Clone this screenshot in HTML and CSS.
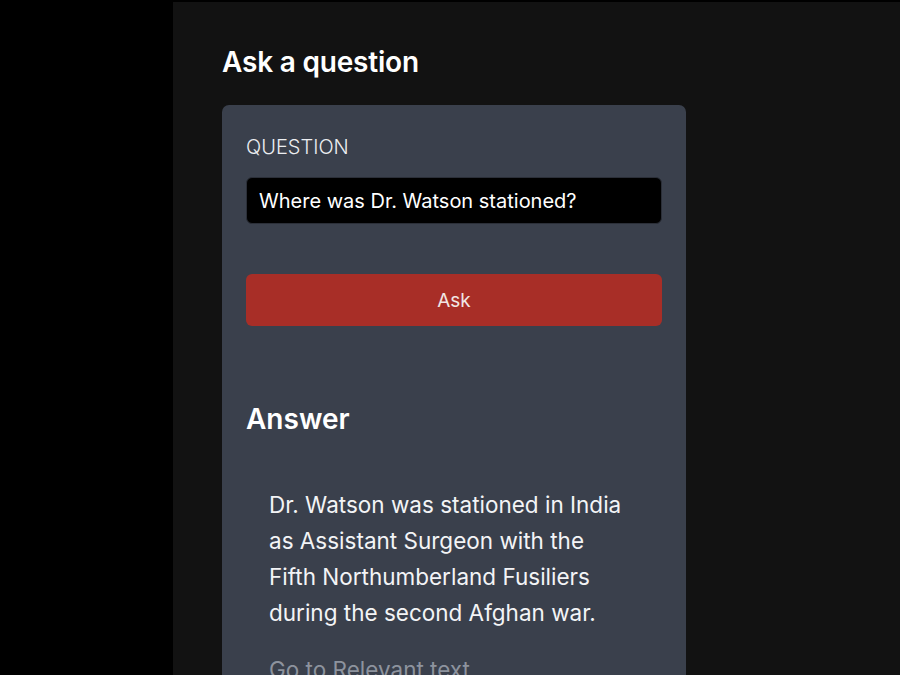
FILE: index.html
```html
<!DOCTYPE html>
<html lang="en">
<head>
<meta charset="utf-8">
<title>Ask a question</title>
<link rel="stylesheet" href="styles.css">
</head>
<body>
<div class="shell">
  <aside class="rail"></aside>
  <main class="panel">
    <h1 class="title">Ask a question</h1>
    <section class="card">
      <label class="label" for="q">QUESTION</label>
      <div class="input" id="q">Where was Dr. Watson stationed?</div>
      <button class="ask">Ask</button>
      <h2 class="answer-title">Answer</h2>
      <div class="answer">
        <p class="answer-text">Dr. Watson was stationed in India as Assistant Surgeon with the Fifth Northumberland Fusiliers during the second Afghan war.</p>
        <a class="link">Go to Relevant text</a>
      </div>
    </section>
  </main>
</div>
</body>
</html>
```
FILE: styles.css
```css
* { box-sizing: border-box; }
html, body {
  margin: 0;
  height: 100%;
  background: #000;
  overflow: hidden;
}
body {
  font-family: Inter, "Noto Sans", sans-serif;
  color: #fff;
}
.shell {
  display: flex;
  height: 100%;
  padding-top: 2px;
}
.rail {
  width: 173px;
  flex: none;
  background: #000;
}
.panel {
  flex: 1;
  background: #121212;
  padding: 42px 0 0 49px;
}
.title {
  margin: 0 0 25px;
  font-size: 28px;
  font-weight: 600;
  line-height: 36px;
  letter-spacing: -0.2px;
}
.card {
  width: 464px;
  background: #3a404c;
  border-radius: 7px;
  padding: 30px 24px 40px;
  display: flex;
  flex-direction: column;
}
.label {
  font-size: 20px;
  font-weight: 300;
  line-height: 24px;
  color: #eceef1;
}
.input {
  margin-top: 18px;
  height: 47px;
  background: #000;
  border: 1px solid #2b2f38;
  border-radius: 6px;
  padding: 0 12px;
  display: flex;
  align-items: center;
  font-size: 20px;
  color: #fff;
}
.ask {
  margin-top: 50px;
  height: 52px;
  background: #a82e27;
  border: none;
  border-radius: 6px;
  color: #f1e6e4;
  font-family: inherit;
  font-size: 19px;
  font-weight: 400;
}
.answer-title {
  margin: 75px 0 0;
  font-size: 28px;
  font-weight: 600;
  line-height: 36px;
}
.answer {
  padding: 50px 0 0 23px;
  display: flex;
  flex-direction: column;
}
.answer-text {
  width: 360px;
  margin: 0;
  font-size: 22.5px;
  line-height: 36px;
  color: #f3f4f6;
}
.link {
  margin-top: 21px;
  font-size: 22.5px;
  line-height: 36px;
  color: #8d939e;
}
```
